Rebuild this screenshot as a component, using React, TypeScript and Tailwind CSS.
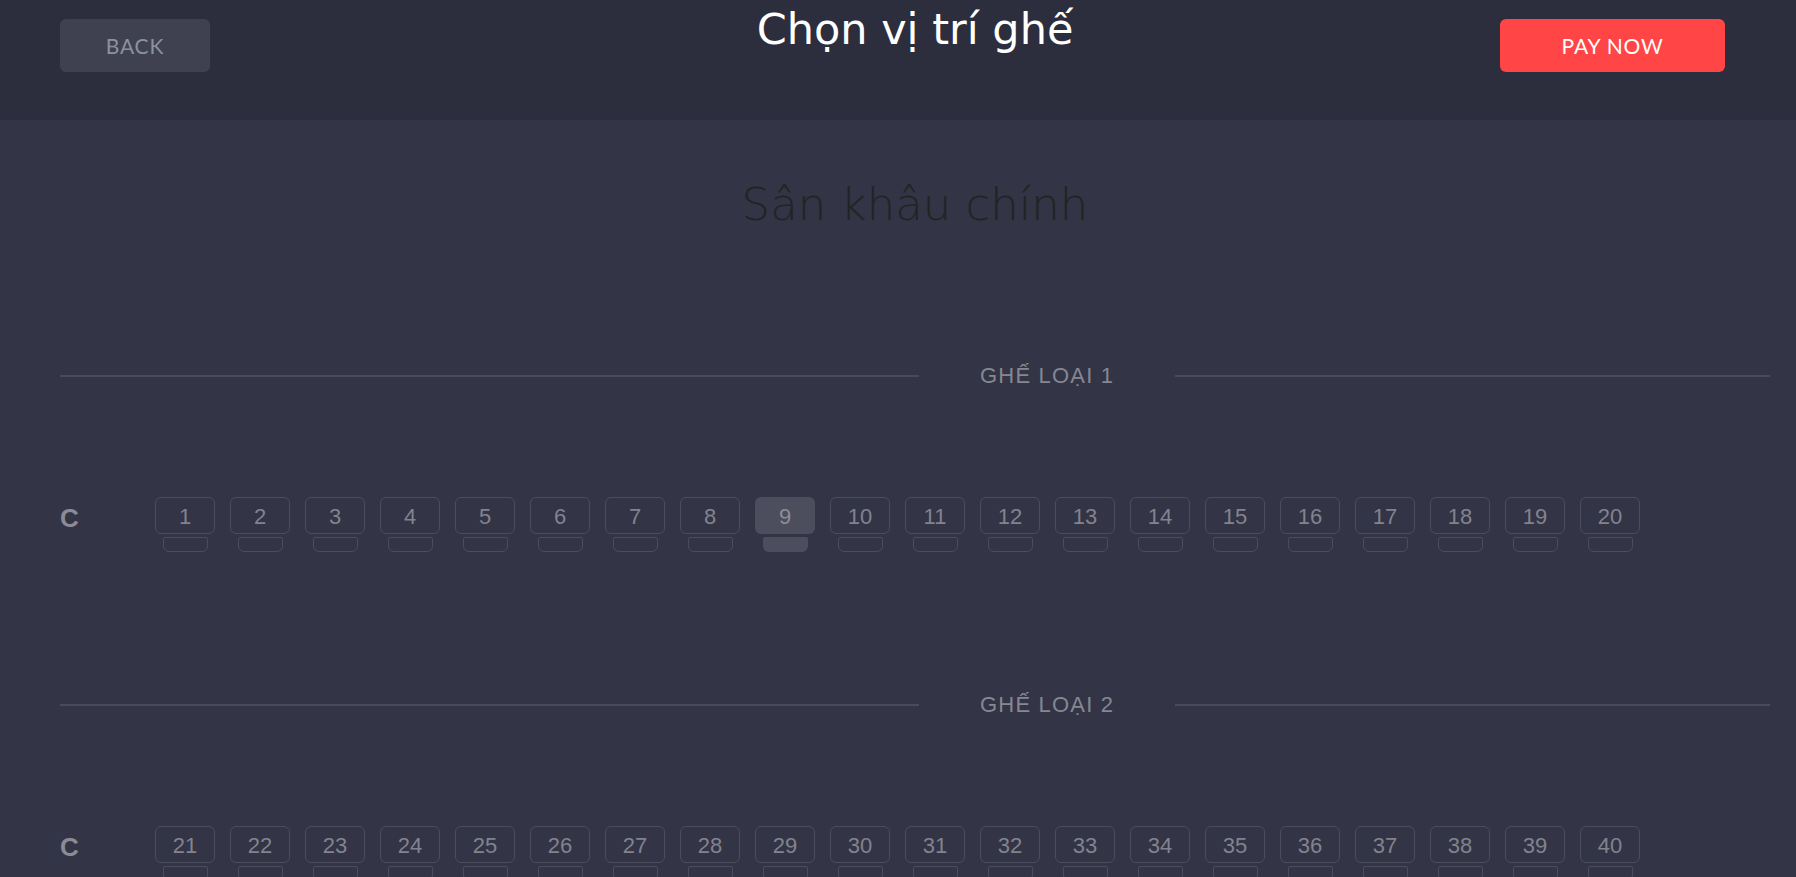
const rows = [
  { label: "GHẾ LOẠI 1", row: "C", seats: Array.from({ length: 20 }, (_, i) => i + 1) },
  { label: "GHẾ LOẠI 2", row: "C", seats: Array.from({ length: 20 }, (_, i) => i + 21) },
];

const selected = [9];

const Seat = ({ num, active }: { num: number; active: boolean }) => (
  <button className="flex flex-col items-center w-[60px] shrink-0">
    <span
      className={
        active
          ? "flex items-center justify-center w-[60px] h-[37px] rounded-[6px] bg-[#4d4e5d] text-[22px] leading-none text-[#8c8d98]"
          : "flex items-center justify-center w-[60px] h-[37px] rounded-[6px] border border-[#4b4c5c] text-[22px] leading-none text-[#82838e]"
      }
      style={{ fontFamily: '"Liberation Sans", Arial, sans-serif' }}
    >
      <span className="mt-[2px]">{num}</span>
    </span>
    <span
      className={
        active
          ? "mt-[3px] w-[45px] h-[15px] rounded-t-[2px] rounded-b-[6px] bg-[#4d4e5d]"
          : "mt-[3px] w-[45px] h-[15px] rounded-t-[2px] rounded-b-[6px] border border-[#4b4c5c]"
      }
    />
  </button>
);

const Divider = ({ label }: { label: string }) => (
  <div className="flex items-center h-[24px]">
    <div className="flex-[13_1_0%] h-[2px] bg-[#494a5a]" />
    <span
      className="px-[61px] text-[22px] leading-[24px] tracking-[1.2px] text-[#868793] whitespace-nowrap"
      style={{ fontFamily: '"Liberation Sans", Arial, sans-serif' }}
    >
      {label}
    </span>
    <div className="flex-[9_1_0%] h-[2px] bg-[#494a5a]" />
  </div>
);

export default function App() {
  return (
    <div className="min-h-screen bg-[#333445]">
      <header className="grid grid-cols-[1fr_auto_1fr] items-start h-[120px] bg-[#2c2e3e] pl-[60px] pr-[26px]">
        <button
          className="justify-self-start mt-[19px] w-[150px] h-[53px] rounded-[6px] bg-[#3f4150] text-[21px] tracking-[0.8px] text-[#8c919d]"
          style={{ fontFamily: "Lato, sans-serif" }}
        >
          BACK
        </button>
        <h1
          className="mt-[4px] text-[43px] leading-[50px] font-normal text-white"
          style={{ fontFamily: '"DejaVu Sans", sans-serif' }}
        >
          Chọn vị trí ghế
        </h1>
        <button
          className="justify-self-end mr-[45px] mt-[19px] w-[225px] h-[53px] rounded-[6px] bg-[#ff4545] text-[21px] tracking-[0.8px] text-white"
          style={{ fontFamily: "Lato, sans-serif" }}
        >
          PAY NOW
        </button>
      </header>

      <main className="pl-[60px] pr-[26px] pb-10">
        <h2
          className="mt-[59px] text-center text-[45px] leading-[52px] font-light text-[#232324]"
          style={{ fontFamily: '"DejaVu Sans", sans-serif' }}
        >
          Sân khâu chính
        </h2>

        <div className="mt-[133px] flex flex-col gap-[141px]">
          {rows.map((r) => (
            <section key={r.label}>
              <Divider label={r.label} />
              <div className="mt-[109px] flex items-start">
                <span
                  className="w-[95px] shrink-0 mt-[8px] text-[26px] leading-[26px] font-bold text-[#8a8b96]"
                  style={{ fontFamily: '"Liberation Sans", Arial, sans-serif' }}
                >
                  {r.row}
                </span>
                <div className="flex gap-[15px]">
                  {r.seats.map((n) => (
                    <Seat key={n} num={n} active={selected.includes(n)} />
                  ))}
                </div>
              </div>
            </section>
          ))}
        </div>
      </main>
    </div>
  );
}
